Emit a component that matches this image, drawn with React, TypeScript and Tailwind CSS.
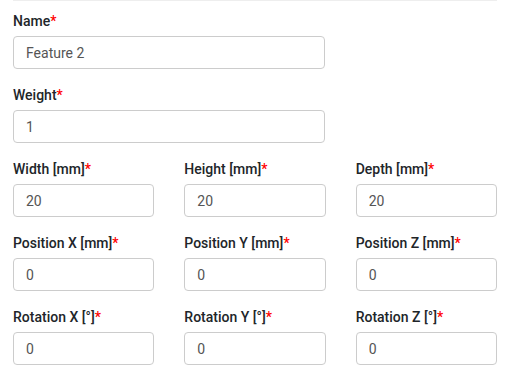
import { useState } from "react";

type Field = { label: string; value: string };

const triples: Field[][] = [
  [
    { label: "Width [mm]", value: "20" },
    { label: "Height [mm]", value: "20" },
    { label: "Depth [mm]", value: "20" },
  ],
  [
    { label: "Position X [mm]", value: "0" },
    { label: "Position Y [mm]", value: "0" },
    { label: "Position Z [mm]", value: "0" },
  ],
  [
    { label: "Rotation X [°]", value: "0" },
    { label: "Rotation Y [°]", value: "0" },
    { label: "Rotation Z [°]", value: "0" },
  ],
];

function FormField({ label, value }: Field) {
  const [val, setVal] = useState(value);
  return (
    <div className="mb-[16px]">
      <label className="mb-[5px] block h-5 text-[14px] leading-5 font-medium text-[#212529]">
        {label}
        <span className="text-[#ff0000]">*</span>
      </label>
      <input
        value={val}
        onChange={e => setVal(e.target.value)}
        className="block h-[33px] w-full rounded-[4px] border border-[#cccccc] bg-white px-[12px] text-[14px] text-[#555555] outline-none"
      />
    </div>
  );
}

export default function App() {
  return (
    <div
      className="min-h-[383px] bg-white"
      style={{ fontFamily: "Roboto, 'Liberation Sans', sans-serif" }}
    >
      <div className="ml-[13px] w-[484px] border-t border-[#eeeeee] pt-[10px]">
        <div className="w-[312px]">
          <FormField label="Name" value="Feature 2" />
          <FormField label="Weight" value="1" />
        </div>
        {triples.map((row, i) => (
          <div key={i} className="grid grid-cols-3 gap-x-[30px]">
            {row.map(f => (
              <FormField key={f.label} {...f} />
            ))}
          </div>
        ))}
      </div>
    </div>
  );
}
